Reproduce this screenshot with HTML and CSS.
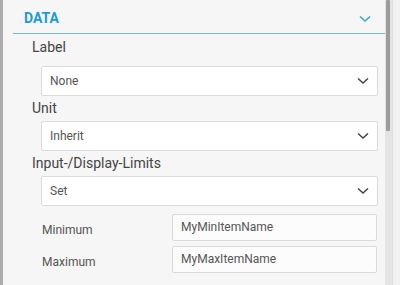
FILE: index.html
```html
<!DOCTYPE html>
<html lang="en">
<head>
  <meta charset="UTF-8" />
  <title>Data settings</title>
  <link rel="stylesheet" href="styles.css">
</head>
<body>
  <div class="frame">
    <div class="panel">
      <div class="section-head">
        <span>DATA</span>
        <svg class="head-chev" width="12" height="8" viewBox="0 0 12 8"><path d="M1 1.5 L6 6 L11 1.5" fill="none" stroke="#3ea3dc" stroke-width="1.6"/></svg>
      </div>

      <div class="field first">
        <div class="field-label">Label</div>
        <div class="select">
          <span>None</span>
          <svg width="12" height="8" viewBox="0 0 12 8"><path d="M1 1.5 L6 6 L11 1.5" fill="none" stroke="#444" stroke-width="1.5"/></svg>
        </div>
      </div>

      <div class="field">
        <div class="field-label">Unit</div>
        <div class="select">
          <span>Inherit</span>
          <svg width="12" height="8" viewBox="0 0 12 8"><path d="M1 1.5 L6 6 L11 1.5" fill="none" stroke="#444" stroke-width="1.5"/></svg>
        </div>
      </div>

      <div class="field">
        <div class="field-label">Input-/Display-Limits</div>
        <div class="select">
          <span>Set</span>
          <svg width="12" height="8" viewBox="0 0 12 8"><path d="M1 1.5 L6 6 L11 1.5" fill="none" stroke="#444" stroke-width="1.5"/></svg>
        </div>
      </div>

      <div class="limits">
        <div class="limit-row">
          <div class="limit-name">Minimum</div>
          <div class="text-input">MyMinItemName</div>
        </div>
        <div class="limit-row">
          <div class="limit-name">Maximum</div>
          <div class="text-input">MyMaxItemName</div>
        </div>
      </div>
    </div>

    <div class="scrollbar">
      <div class="thumb"></div>
    </div>
    <div class="edge"></div>
  </div>
</body>
</html>
```

FILE: styles.css
```css
body {
  margin: 0;
  font-family: Roboto, "Liberation Sans", sans-serif;
  background: #f4f4f4;
}

.frame {
  display: flex;
  height: 285px;
  border-left: 3px solid #acacac;
  overflow: hidden;
}

.panel {
  flex: 1;
  background: #f6f6f6;
}

.section-head {
  display: flex;
  justify-content: space-between;
  align-items: center;
  margin-left: 10px;
  height: 31px;
  padding: 2px 14px 0 11px;
  border-bottom: 1px solid #74b9e0;
  color: #1c9ad8;
  font-weight: 700;
  font-size: 14px;
}

.head-chev {
  margin-top: 2px;
}

.field-label {
  height: 22px;
  line-height: 22px;
  padding: 1px 0 0 29px;
  font-size: 14px;
  color: #444;
}

.select {
  display: flex;
  justify-content: space-between;
  align-items: center;
  height: 28px;
  margin: 2px 7px 0 38px;
  padding: 0 8px 0 8px;
  background: #fff;
  border: 1px solid #dcdcdc;
  border-radius: 2px;
  font-size: 12px;
  color: #555;
}

.first .field-label {
  height: 24px;
  line-height: 24px;
}

.first .select {
  margin-top: 7px;
}

.limits {
  padding-top: 8px;
}

.limit-row {
  display: flex;
  align-items: center;
  height: 27px;
  margin: 0 8px 5px 39px;
}

.limit-name {
  width: 130px;
  padding-top: 4px;
  font-size: 12px;
  color: #555;
}

.text-input {
  flex: 1;
  height: 25px;
  line-height: 25px;
  padding-left: 8px;
  background: #fcfcfc;
  border: 1px solid #dadada;
  border-radius: 2px;
  font-size: 12px;
  color: #555;
}

.scrollbar {
  width: 7px;
  background: #e4e4e4;
}

.thumb {
  width: 4px;
  height: 131px;
  margin-left: 1px;
  background: #9c9c9c;
  border-radius: 1px;
}

.edge {
  width: 7px;
  background: #f2f2f2;
  border-left: 1px solid #dedede;
}
```
